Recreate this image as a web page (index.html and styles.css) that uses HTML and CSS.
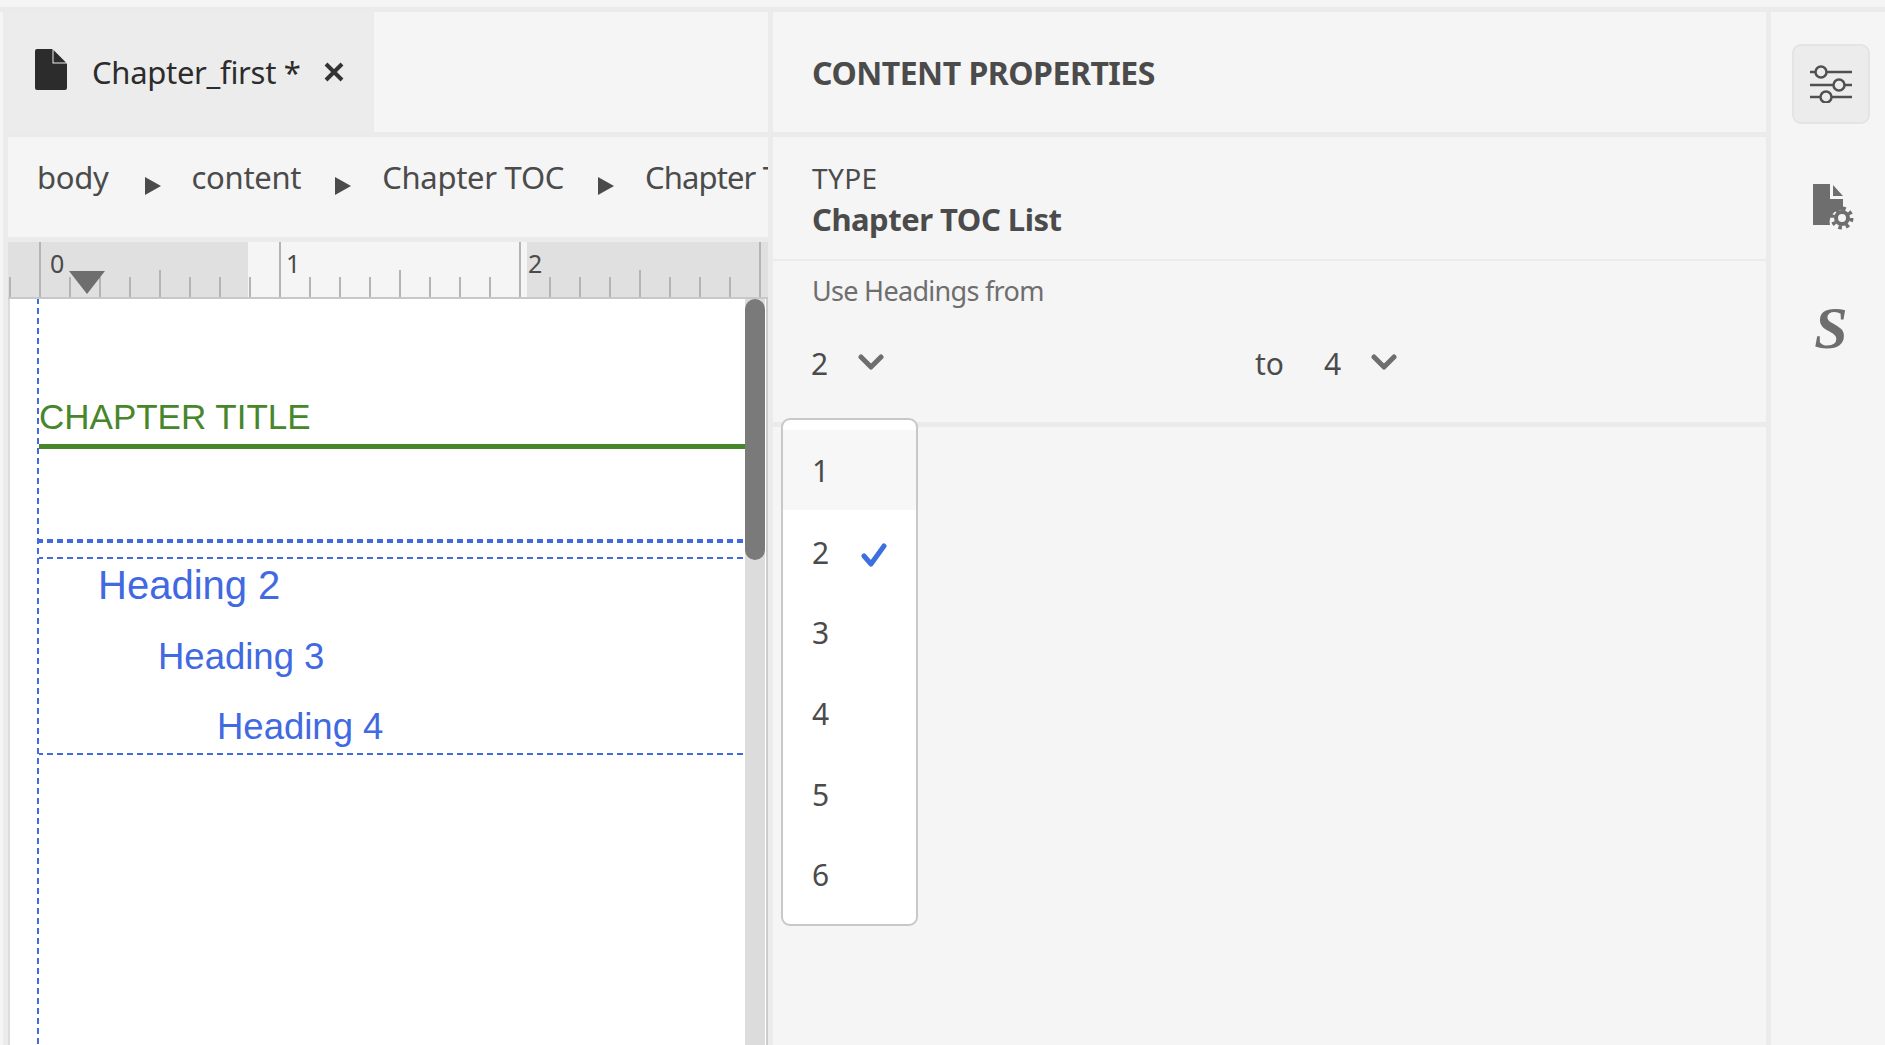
FILE: index.html
```html
<!DOCTYPE html>
<html lang="en">
<head>
    <meta charset="UTF-8">
    <title>Content Properties</title>
    <link rel="stylesheet" href="styles.css">
</head>
<body>
    <div class="app">
        <div class="editor">
            <div class="tabs">
                <div class="tab">
                    <svg class="tab-icon" width="32" height="41" viewBox="0 0 32 41"><path d="M2 0h15.500v14.500h14.500v24.500a2 2 0 0 1-2 2h-28a2 2 0 0 1-2-2v-37a2 2 0 0 1 2-2z" fill="#2c2c2c"/><path d="M18.500 1l12.500 12.500h-12.500z" fill="#2c2c2c"/></svg>
                    <span class="tab-name">Chapter_first *</span>
                    <svg class="tab-close" width="20" height="20" viewBox="0 0 20 20"><path d="M2 2l16 16M18 2l-16 16" stroke="#333" stroke-width="4" fill="none"/></svg>
                </div>
            </div>
            <div class="crumbs">
                <span class="crumb crumb-first">body</span><i class="crumb-arrow"></i>
                <span class="crumb">content</span><i class="crumb-arrow"></i>
                <span class="crumb">Chapter TOC</span><i class="crumb-arrow"></i>
                <span class="crumb crumb-last">Chapter TOC List</span>
            </div>
            <div class="ruler">
                <span class="ruler-num">0</span>
                <span class="ruler-num ruler-num-one">1</span>
                <span class="ruler-num ruler-num-two">2</span>
                <i class="ruler-marker"></i>
            </div>
            <div class="doc">
                <div class="page">
                    <div class="chapter-title">CHAPTER TITLE</div>
                    <div class="dash-thick"></div>
                    <div class="toc">
                        <div class="toc-h2">Heading 2</div>
                        <div class="toc-h3">Heading 3</div>
                        <div class="toc-h4">Heading 4</div>
                    </div>
                </div>
                <div class="scrollbar"><div class="scroll-thumb"></div></div>
            </div>
        </div>

        <div class="props">
            <div class="props-head">CONTENT PROPERTIES</div>
            <div class="props-type">
                <div class="type-label">TYPE</div>
                <div class="type-value">Chapter TOC List</div>
            </div>
            <div class="props-levels">
                <div class="levels-label">Use Headings from</div>
                <div class="levels-row">
                    <div class="level level-from">
                        <span>2</span>
                        <svg width="26" height="16" viewBox="0 0 26 16"><path d="M3 3l10 10 10-10" stroke="#6e6e6e" stroke-width="5" stroke-linecap="round" stroke-linejoin="round" fill="none"/></svg>
                    </div>
                    <span class="levels-to">to</span>
                    <div class="level">
                        <span>4</span>
                        <svg width="26" height="16" viewBox="0 0 26 16"><path d="M3 3l10 10 10-10" stroke="#6e6e6e" stroke-width="5" stroke-linecap="round" stroke-linejoin="round" fill="none"/></svg>
                    </div>
                </div>
            </div>
            <ul class="menu">
                <li class="menu-item hover">1</li>
                <li class="menu-item">2
                    <svg class="menu-check" width="26" height="24" viewBox="0 0 26 24"><path d="M3 13l7 8 13-18" stroke="#3d6fe0" stroke-width="5" stroke-linecap="round" stroke-linejoin="round" fill="none"/></svg>
                </li>
                <li class="menu-item">3</li>
                <li class="menu-item">4</li>
                <li class="menu-item">5</li>
                <li class="menu-item">6</li>
            </ul>
        </div>

        <div class="rail">
            <div class="rail-btn active">
                <svg width="42" height="38" viewBox="0 0 42 38" fill="none" stroke="#505050" stroke-width="2.500"><path d="M0 7h42M0 20h42M0 32h42"/><circle cx="11" cy="7" r="5.500" fill="#ececec"/><circle cx="29" cy="20" r="5.500" fill="#ececec"/><circle cx="16" cy="32" r="5.500" fill="#ececec"/></svg>
            </div>
            <div class="rail-btn rail-file">
                <svg width="42" height="46" viewBox="0 0 42 46"><path d="M0 0h17v15h13v11a12 12 0 0 0-13 15h-17z" fill="#6e6e6e"/><path d="M20 1l10 11h-10z" fill="#6e6e6e"/><circle cx="29" cy="34" r="6" fill="none" stroke="#6e6e6e" stroke-width="4"/><circle cx="29" cy="34" r="9.500" fill="none" stroke="#6e6e6e" stroke-width="4" stroke-dasharray="3.500 3.960"/></svg>
            </div>
            <div class="rail-btn rail-s">S</div>
        </div>
    </div>
</body>
</html>
```

FILE: styles.css
```css
* {
    box-sizing: border-box;
}
html, body {
    height: 100%;
}
body {
    margin: 0;
    padding-top: 7px;
    background-color: #f5f5f5;
    color: #4b4b4b;
    font-family: "Noto Sans", sans-serif;
    overflow: hidden;
}
.app {
    display: flex;
    height: 1038px;
    padding-left: 3px;
    border-top: 5px solid #ebebeb;
}

/* left side */
.editor {
    display: flex;
    flex-direction: column;
    width: 770px;
    flex-shrink: 0;
    background-color: #ebebeb;
    padding: 0 5px;
    gap: 5px;
}
.tabs {
    display: flex;
    height: 120px;
    flex-shrink: 0;
    background-color: #f5f5f5;
}
.tab {
    display: flex;
    align-items: center;
    width: 366px;
    padding-left: 27px;
    background-color: #ececec;
    border-right: 2px solid #ebebeb;
}
.tab-icon {
    margin-top: -6px;
}
.tab-name {
    margin-left: 25px;
    font-size: 31px;
    letter-spacing: -0.3px;
    color: #2c2c2c;
}
.tab-close {
    margin-left: 23px;
}
.crumbs {
    display: flex;
    align-items: center;
    height: 100px;
    flex-shrink: 0;
    padding-left: 29px;
    padding-bottom: 20px;
    background-color: #f5f5f5;
    white-space: nowrap;
}
.crumb {
    font-size: 31px;
    letter-spacing: -0.3px;
}
.crumb-first {
    margin-right: 2px;
}
.crumb-last {
    flex: 1;
    min-width: 0;
    overflow: hidden;
    letter-spacing: -0.9px;
}
.crumb-arrow {
    flex-shrink: 0;
    width: 0;
    height: 0;
    margin: 17px 31px 0 34px;
    border-left: 16px solid #4b4b4b;
    border-top: 9px solid transparent;
    border-bottom: 9px solid transparent;
}
.ruler {
    position: relative;
    display: flex;
    height: 57px;
    flex-shrink: 0;
    margin-bottom: -5px;
    padding-left: 32px;
    border-bottom: 2px solid #c8c8c8;
    background-color: #e0e0e0;
    background-image:
        linear-gradient(90deg, #b4b4b4 2px, transparent 2px),
        linear-gradient(90deg, #b4b4b4 2px, transparent 2px),
        linear-gradient(90deg, #b4b4b4 2px, transparent 2px),
        linear-gradient(90deg, #e0e0e0 240px, #f5f5f5 240px, #f5f5f5 519px, #e0e0e0 519px);
    background-size: 240px 55px, 240px 27px, 30px 20px, 100% 100%;
    background-position: 31px 0, 151px 100%, 1px 100%, 0 0;
    background-repeat: repeat-x, repeat-x, repeat-x, no-repeat;
}
.ruler-num {
    width: 240px;
    padding: 5px 0 0 10px;
    font-size: 25px;
    line-height: 32px;
}
.ruler-num-one {
    padding-left: 6px;
}
.ruler-num-two {
    padding-left: 8px;
}
.ruler-marker {
    position: absolute;
    left: 61px;
    top: 29px;
    width: 0;
    height: 0;
    border-top: 23px solid #6e6e6e;
    border-left: 18px solid transparent;
    border-right: 18px solid transparent;
}
.doc {
    display: flex;
    flex: 1;
    min-height: 0;
    border-left: 2px solid #dcdcdc;
    border-right: 2px solid #cccccc;
}
.page {
    flex: 1;
    padding-left: 29px;
    padding-top: 98px;
    background-color: #fff;
    background-image: linear-gradient(#4169e1 6px, transparent 6px);
    background-size: 2px 10px;
    background-position: 27px 9px;
    background-repeat: repeat-y;
    font-family: "Liberation Sans", Arial, sans-serif;
    color: #4169e1;
}
.chapter-title {
    height: 52px;
    line-height: 40px;
    border-bottom: 5px solid #47862a;
    font-size: 35px;
    color: #47862a;
}
.dash-thick {
    height: 4px;
    margin: 90px 2px 0 0;
    background-image: linear-gradient(90deg, #4169e1 6px, transparent 6px);
    background-size: 10px 4px;
    background-position: 8px 0;
}
.toc {
    margin: 14px 2px 0 0;
    padding: 2px 0 3px;
    background-image:
        linear-gradient(90deg, #4169e1 6px, transparent 6px),
        linear-gradient(90deg, #4169e1 6px, transparent 6px);
    background-size: 10px 2px;
    background-position: 8px 0, 8px 100%;
    background-repeat: repeat-x;
}
.toc-h2 {
    padding-left: 59px;
    font-size: 40px;
    line-height: 52px;
}
.toc-h3 {
    margin-top: 21px;
    padding-left: 119px;
    font-size: 36.500px;
    line-height: 50px;
}
.toc-h4 {
    margin-top: 20px;
    padding-left: 178px;
    font-size: 36.500px;
    line-height: 50px;
}
.scrollbar {
    width: 21px;
    flex-shrink: 0;
    border-right: 1px solid #fff;
    background-color: #dcdcdc;
}
.scroll-thumb {
    height: 261px;
    border-radius: 10px;
    background-color: #7a7a7a;
}

/* properties */
.props {
    position: relative;
    flex: 1;
    border-right: 5px solid #ebebeb;
}
.props-head {
    height: 125px;
    padding: 0 39px 4px;
    border-bottom: 5px solid #ebebeb;
    font-size: 32px;
    line-height: 122px;
    font-weight: 700;
    letter-spacing: -0.5px;
}
.props-type {
    height: 124px;
    padding: 23px 39px 0;
    border-bottom: 2px solid #ebebeb;
}
.type-label {
    font-size: 28px;
    line-height: 36px;
    letter-spacing: 0.4px;
}
.type-value {
    margin-top: 2px;
    font-size: 31px;
    line-height: 42px;
    font-weight: 700;
    letter-spacing: -0.5px;
}
.props-levels {
    height: 166px;
    padding: 12px 39px 0;
    border-bottom: 5px solid #ebebeb;
}
.levels-label {
    font-size: 27px;
    line-height: 36px;
    letter-spacing: -0.7px;
    color: #6e6e6e;
}
.levels-row {
    display: flex;
    align-items: center;
    height: 48px;
    margin-top: 30px;
    font-size: 30px;
}
.level {
    display: flex;
    align-items: center;
    gap: 30px;
}
.level svg {
    margin-top: -2px;
}
.level-from {
    width: 442px;
    margin-left: -1px;
}
.levels-to {
    width: 69px;
    margin-left: 2px;
}
.menu {
    position: absolute;
    left: 8px;
    top: 406px;
    width: 137px;
    margin: 0;
    padding: 10px 0 9px;
    list-style: none;
    background-color: #fff;
    border: 2px solid #c8c8c8;
    border-radius: 9px;
}
.menu-item {
    display: flex;
    align-items: center;
    height: 80.600px;
    padding-left: 29px;
    font-size: 30px;
}
.menu-item.hover {
    height: 80px;
    margin-bottom: 2px;
    background-color: #f7f7f7;
}
.menu-check {
    margin-top: 5px;
    margin-left: 32px;
}

/* right rail */
.rail {
    display: flex;
    flex-direction: column;
    align-items: center;
    width: 114px;
    flex-shrink: 0;
    padding-top: 32px;
    padding-left: 6px;
}
.rail-btn {
    display: flex;
    align-items: center;
    justify-content: center;
    width: 78px;
    height: 80px;
    margin-bottom: 42px;
}
.rail-btn.active {
    background-color: #ececec;
    border: 2px solid #e4e4e4;
    border-radius: 9px;
}
.rail-file svg {
    margin-top: 2px;
    margin-left: 6px;
}
.rail-s {
    font-family: "Liberation Serif", serif;
    font-weight: 700;
    font-style: italic;
    font-size: 60px;
    color: #6e6e6e;
}
```
